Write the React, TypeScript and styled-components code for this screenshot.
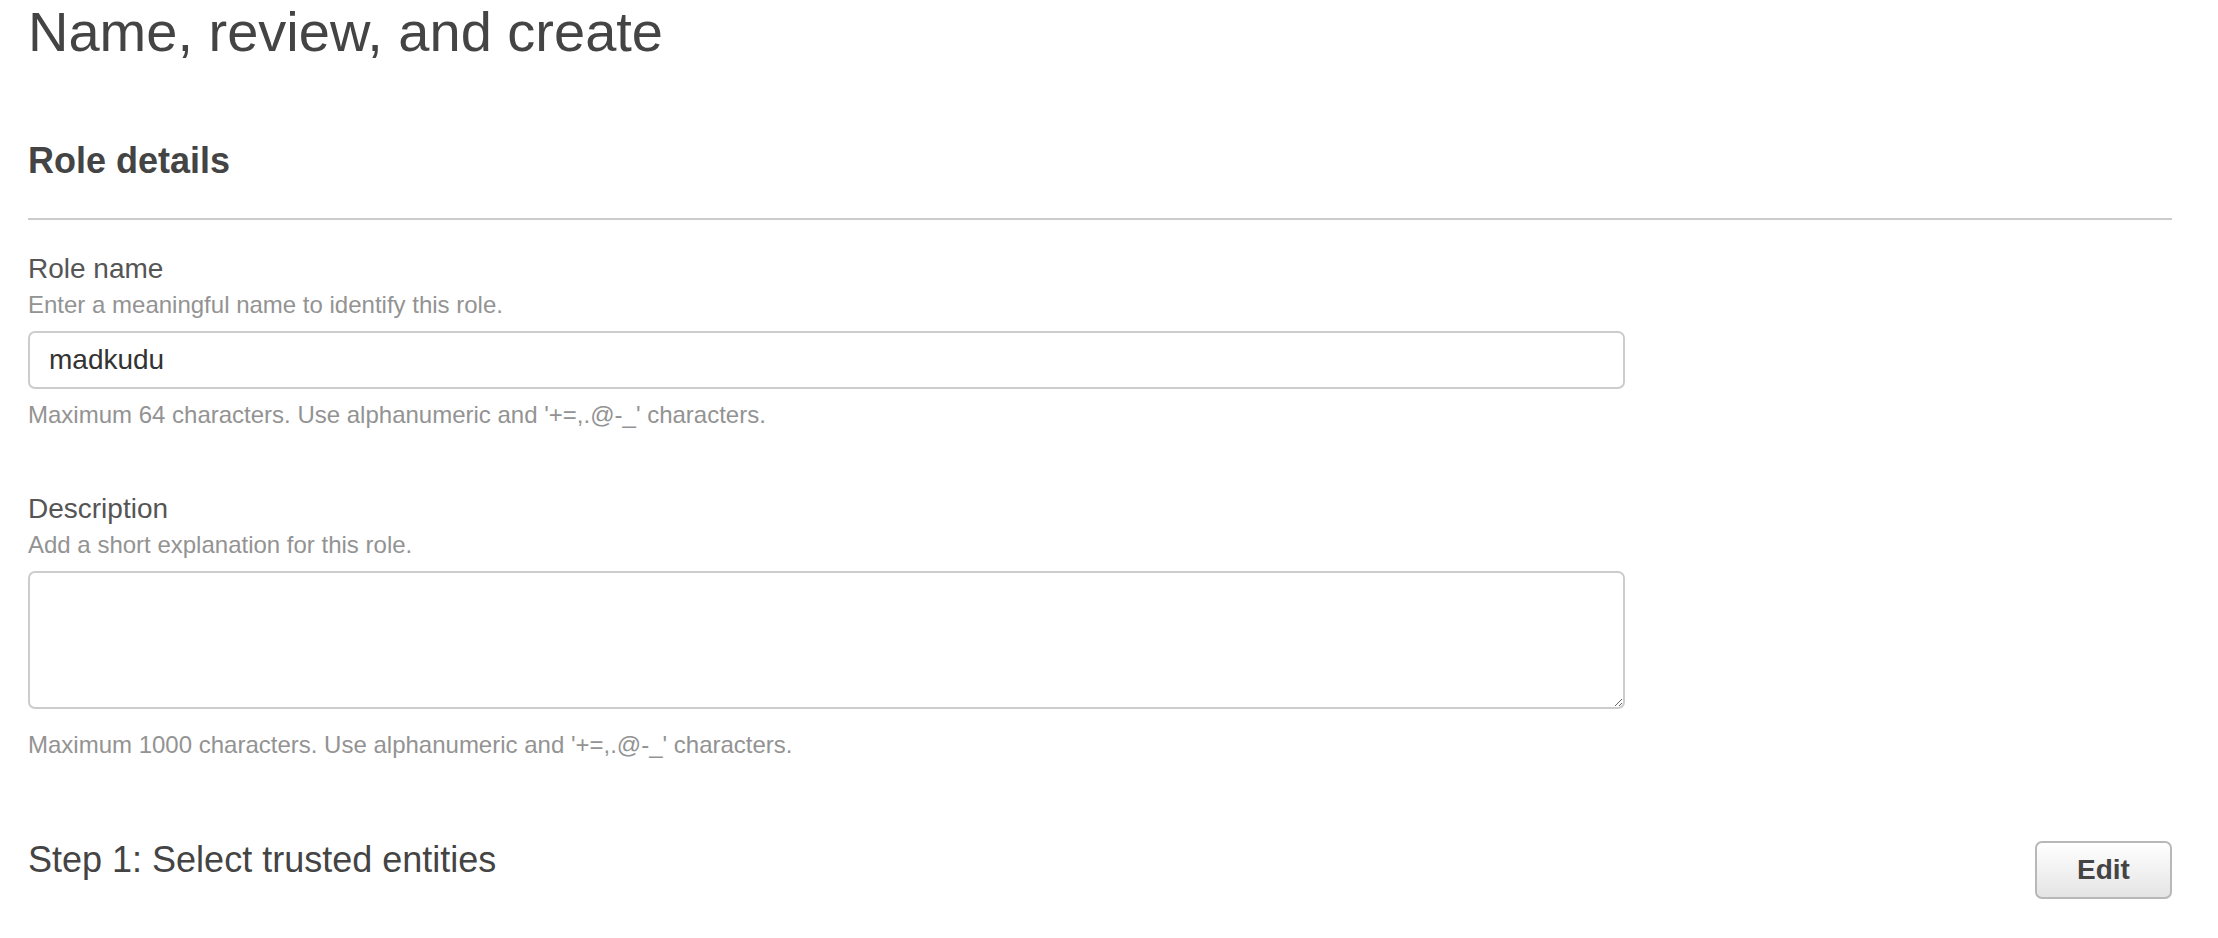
import React from "react";
import styled, { createGlobalStyle } from "styled-components";

const GlobalStyle = createGlobalStyle`
  html, body {
    margin: 0;
    padding: 0;
    background: #ffffff;
  }
  body {
    font-family: "Liberation Sans", Arial, Helvetica, sans-serif;
    color: #444444;
  }
  * { box-sizing: border-box; }
`;

const Page = styled.main`
  width: 2144px;
  margin-left: 28px;
  display: flex;
  flex-direction: column;
`;

const Title = styled.h1`
  margin: 0;
  font-size: 56px;
  line-height: 64px;
  font-weight: 400;
  color: #444444;
`;

const SectionHeading = styled.h2<{ $bold?: boolean; $top: number }>`
  margin: ${(p) => p.$top}px 0 0;
  font-size: 36px;
  line-height: 44px;
  font-weight: ${(p) => (p.$bold ? 700 : 400)};
  color: #444444;
`;

const Rule = styled.hr`
  margin: 35px 0 0;
  border: none;
  height: 2px;
  background: #cccccc;
`;

const Field = styled.div<{ $top: number }>`
  margin-top: ${(p) => p.$top}px;
  display: flex;
  flex-direction: column;
`;

const Label = styled.label`
  font-size: 28px;
  line-height: 34px;
  color: #555555;
`;

const Help = styled.div<{ $top: number }>`
  margin-top: ${(p) => p.$top}px;
  font-size: 24px;
  line-height: 28px;
  color: #939393;
`;

const TextInput = styled.input`
  margin-top: 12px;
  width: 1597px;
  height: 58px;
  border: 2px solid #cccccc;
  border-radius: 7px;
  padding: 0 19px;
  font-family: "Liberation Sans", Arial, Helvetica, sans-serif;
  font-size: 28px;
  color: #333333;
  background: #ffffff;
  outline: none;
`;

const TextArea = styled.textarea`
  margin-top: 12px;
  width: 1597px;
  height: 138px;
  border: 2px solid #cccccc;
  border-radius: 7px;
  padding: 12px 19px;
  font-family: "Liberation Sans", Arial, Helvetica, sans-serif;
  font-size: 28px;
  color: #333333;
  background: #ffffff;
  outline: none;
  resize: both;
  display: block;
`;

const StepRow = styled.div`
  margin-top: 79px;
  display: flex;
  justify-content: space-between;
  align-items: flex-start;
`;

const StepTitle = styled.h2`
  margin: 0;
  font-size: 36px;
  line-height: 44px;
  font-weight: 400;
  color: #444444;
`;

const EditButton = styled.button`
  margin-top: 3px;
  width: 137px;
  height: 58px;
  border: 2px solid #b8b8b8;
  border-radius: 7px;
  background: linear-gradient(#ffffff, #e4e4e4);
  font-family: "Liberation Sans", Arial, Helvetica, sans-serif;
  font-size: 28px;
  font-weight: 700;
  color: #444444;
  padding: 0;
  cursor: pointer;
`;

export default function App() {
  return (
    <>
      <GlobalStyle />
      <Page>
        <Title>Name, review, and create</Title>
        <SectionHeading $bold $top={75}>Role details</SectionHeading>
        <Rule />
        <Field $top={32}>
          <Label htmlFor="role-name">Role name</Label>
          <Help $top={5}>Enter a meaningful name to identify this role.</Help>
          <TextInput id="role-name" defaultValue="madkudu" />
          <Help $top={12}>Maximum 64 characters. Use alphanumeric and '+=,.@-_' characters.</Help>
        </Field>
        <Field $top={63}>
          <Label htmlFor="role-desc">Description</Label>
          <Help $top={5}>Add a short explanation for this role.</Help>
          <TextArea id="role-desc" />
          <Help $top={22}>Maximum 1000 characters. Use alphanumeric and '+=,.@-_' characters.</Help>
        </Field>
        <StepRow>
          <StepTitle>Step 1: Select trusted entities</StepTitle>
          <EditButton type="button">Edit</EditButton>
        </StepRow>
      </Page>
    </>
  );
}
